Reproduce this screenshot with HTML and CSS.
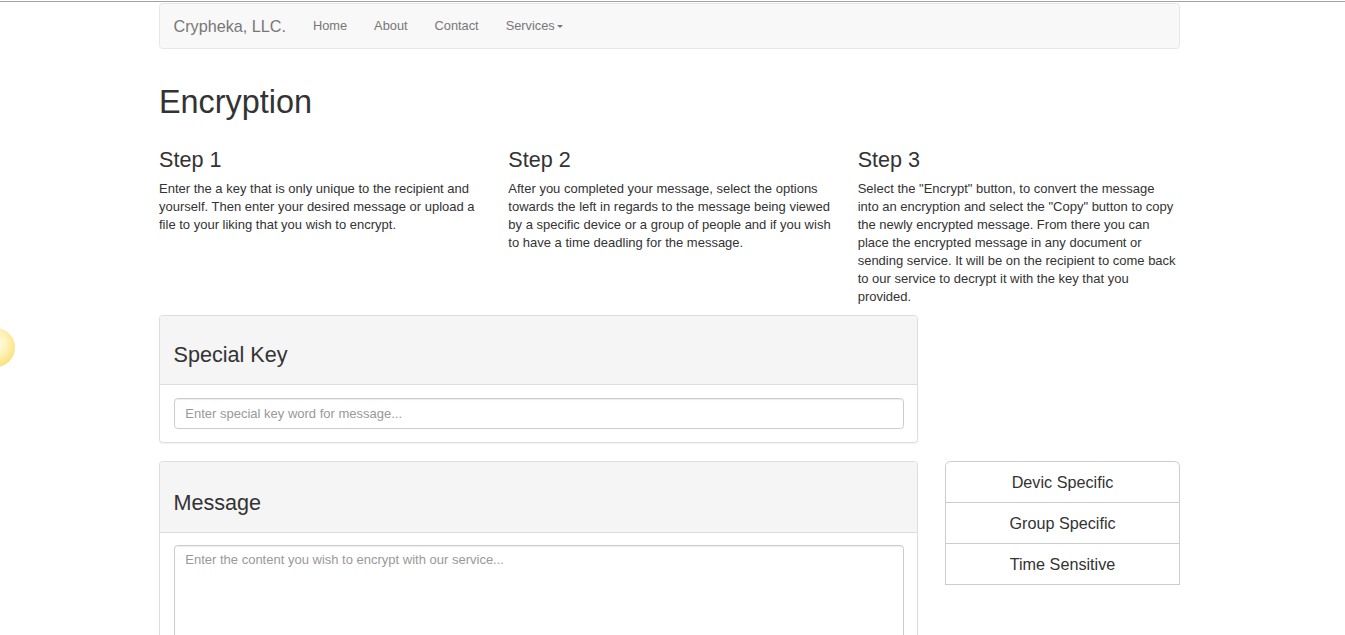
FILE: index.html
```html
<!DOCTYPE html>
<html lang="en">
<head>
<meta charset="utf-8">
<title>Encryption - Crypheka, LLC.</title>
<link rel="stylesheet" href="styles.css">
</head>
<body>
<div class="topline"></div>
<div class="glow"></div>
<div class="container">
  <nav class="navbar">
    <a class="brand" href="#">Crypheka, LLC.</a>
    <ul class="nav">
      <li><a href="#">Home</a></li>
      <li><a href="#">About</a></li>
      <li><a href="#">Contact</a></li>
      <li><a href="#">Services<span class="caret"></span></a></li>
    </ul>
  </nav>

  <h1 class="page-title">Encryption</h1>

  <div class="steps">
    <div class="step">
      <h3>Step 1</h3>
      <p>Enter the a key that is only unique to the recipient and<br>yourself. Then enter your desired message or upload a<br>file to your liking that you wish to encrypt.</p>
    </div>
    <div class="step">
      <h3>Step 2</h3>
      <p>After you completed your message, select the options<br>towards the left in regards to the message being viewed<br>by a specific device or a group of people and if you wish<br>to have a time deadling for the message.</p>
    </div>
    <div class="step">
      <h3>Step 3</h3>
      <p>Select the "Encrypt" button, to convert the message<br>into an encryption and select the "Copy" button to copy<br>the newly encrypted message. From there you can<br>place the encrypted message in any document or<br>sending service. It will be on the recipient to come back<br>to our service to decrypt it with the key that you<br>provided.</p>
    </div>
  </div>

  <div class="workspace">
    <div class="panel panel-key">
      <div class="panel-heading"><h3>Special Key</h3></div>
      <div class="panel-body">
        <input class="form-control" type="text" placeholder="Enter special key word for message...">
      </div>
    </div>

    <div class="panel panel-message">
      <div class="panel-heading tall"><h3>Message</h3></div>
      <div class="panel-body">
        <textarea class="form-control textarea" placeholder="Enter the content you wish to encrypt with our service..."></textarea>
      </div>
    </div>

    <div class="btn-group">
      <button class="btn">Devic Specific</button>
      <button class="btn">Group Specific</button>
      <button class="btn">Time Sensitive</button>
    </div>
  </div>
</div>
</body>
</html>
```

FILE: styles.css
```css
* { box-sizing: border-box; }

html, body { margin: 0; padding: 0; }

body {
  font-family: "Liberation Sans", Arial, Helvetica, sans-serif;
  font-size: 13px;
  line-height: 18px;
  color: #333;
  background: #fff;
  padding-right: 6px;
  position: relative;
  overflow: hidden;
  height: 635px;
}

.topline {
  margin-top: 1px;
  margin-right: -6px;
  border-top: 1px solid #a3a3a3;
  height: 0;
}

.glow {
  position: absolute;
  left: -24px;
  top: 328px;
  width: 39px;
  height: 39px;
  border-radius: 50%;
  background: radial-gradient(circle at 45% 40%, #fffef2 0%, #fff6c4 35%, #fbe486 70%, #efc443 100%);
}

.container {
  width: 1021px;
  margin: 0 auto;
}

/* Navbar */
.navbar {
  margin-top: 1px;
  height: 46px;
  display: flex;
  align-items: center;
  background: #f8f8f8;
  border: 1px solid #e7e7e7;
  border-radius: 3.6px;
  margin-bottom: 36px;
}

.brand {
  font-size: 16.2px;
  color: #777;
  text-decoration: none;
  padding: 0 13.5px;
  line-height: 18px;
}

.nav {
  list-style: none;
  margin: 0;
  padding: 0;
  display: flex;
}

.nav a {
  display: block;
  padding: 0 13.5px;
  color: #777;
  text-decoration: none;
  font-size: 12.8px;
  line-height: 18px;
}

.caret {
  display: inline-block;
  width: 0;
  height: 0;
  margin-left: 2px;
  vertical-align: middle;
  border-top: 3.6px solid #777;
  border-left: 3.6px solid transparent;
  border-right: 3.6px solid transparent;
}

/* Headings */
.page-title {
  font-size: 32.4px;
  font-weight: 500;
  line-height: 1.1;
  margin: 18px 0 9px;
}

.steps {
  display: grid;
  grid-template-columns: repeat(3, 1fr);
  column-gap: 27px;
}

.step h3 {
  font-size: 21.6px;
  font-weight: 500;
  line-height: 1.1;
  margin: 18px 0 9px;
}

.step p {
  margin: 0 0 9px;
  white-space: nowrap;
}

/* Workspace */
.workspace {
  display: grid;
  grid-template-columns: 759px 235px;
  column-gap: 27px;
  align-items: start;
}

.panel {
  grid-column: 1;
  background: #fff;
  border: 1px solid #ddd;
  border-radius: 3.6px;
  margin-bottom: 18px;
  box-shadow: 0 1px 1px rgba(0, 0, 0, 0.05);
}

.panel-key { grid-row: 1; }
.panel-message { grid-row: 2; }

.panel-heading {
  background: #f5f5f5;
  border-bottom: 1px solid #ddd;
  border-radius: 3px 3px 0 0;
  padding: 9px 13.5px 8px;
}

.panel-heading.tall {
  padding-top: 11px;
  padding-bottom: 8.5px;
}

.panel-heading h3 {
  font-size: 21.6px;
  font-weight: 500;
  line-height: 1.1;
  margin: 18px 0 9px;
}

.panel-body {
  padding: 13px 13.5px 13.5px;
}

.panel-message .panel-body {
  padding-top: 12px;
}

.form-control {
  display: block;
  width: 100%;
  height: 30.6px;
  padding: 5px 10.8px;
  font-family: "Liberation Sans", Arial, Helvetica, sans-serif;
  font-size: 13px;
  line-height: 18px;
  color: #555;
  background: #fff;
  border: 1px solid #ccc;
  border-radius: 3.6px;
  box-shadow: inset 0 1px 1px rgba(0, 0, 0, 0.075);
  outline: none;
}

.form-control::placeholder { color: #999; }

.textarea {
  height: 200px;
  resize: none;
  padding-top: 5px;
}

/* Button group */
.btn-group {
  grid-column: 2;
  grid-row: 2;
  display: flex;
  flex-direction: column;
}

.btn {
  display: block;
  width: 100%;
  height: 42px;
  padding: 10px 14px 8px;
  font-family: "Liberation Sans", Arial, Helvetica, sans-serif;
  font-size: 16.2px;
  line-height: 21.6px;
  color: #333;
  background: #fff;
  border: 1px solid #ccc;
  border-radius: 0;
  cursor: pointer;
}

.btn + .btn { margin-top: -1px; }

.btn:first-child { border-radius: 5.4px 5.4px 0 0; }
```
